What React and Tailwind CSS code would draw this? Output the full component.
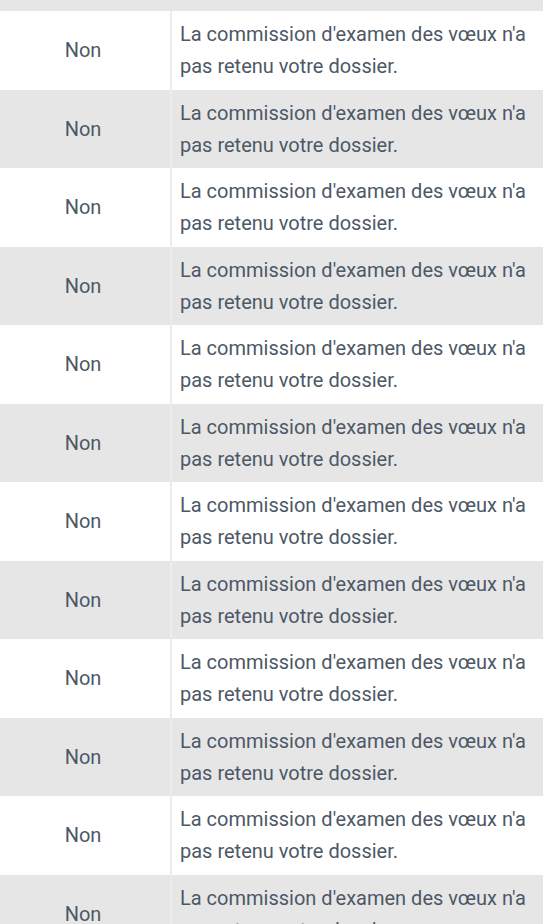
const rows = Array.from({ length: 12 }, (_, i) => i);

export default function App() {
  return (
    <div className="w-[543px] h-[924px] overflow-hidden bg-[#e6e6e6] font-['Roboto',sans-serif] text-[#4d5866]">
      <div className="h-[11px]" />
      {rows.map((i) => (
        <div
          key={i}
          className={`flex h-[78.5px] ${i % 2 === 0 ? 'bg-white' : 'bg-[#e6e6e6]'}`}
        >
          <div className="w-[172px] shrink-0 flex items-center justify-center pr-[4px] text-[20px] border-r-2 border-[#ececec]">
            Non
          </div>
          <div className="flex-1 flex items-center pl-[8px] pr-2 text-[20px] leading-[32px] whitespace-nowrap">
            La commission d'examen des vœux n'a
            <br />
            pas retenu votre dossier.
          </div>
        </div>
      ))}
    </div>
  );
}
